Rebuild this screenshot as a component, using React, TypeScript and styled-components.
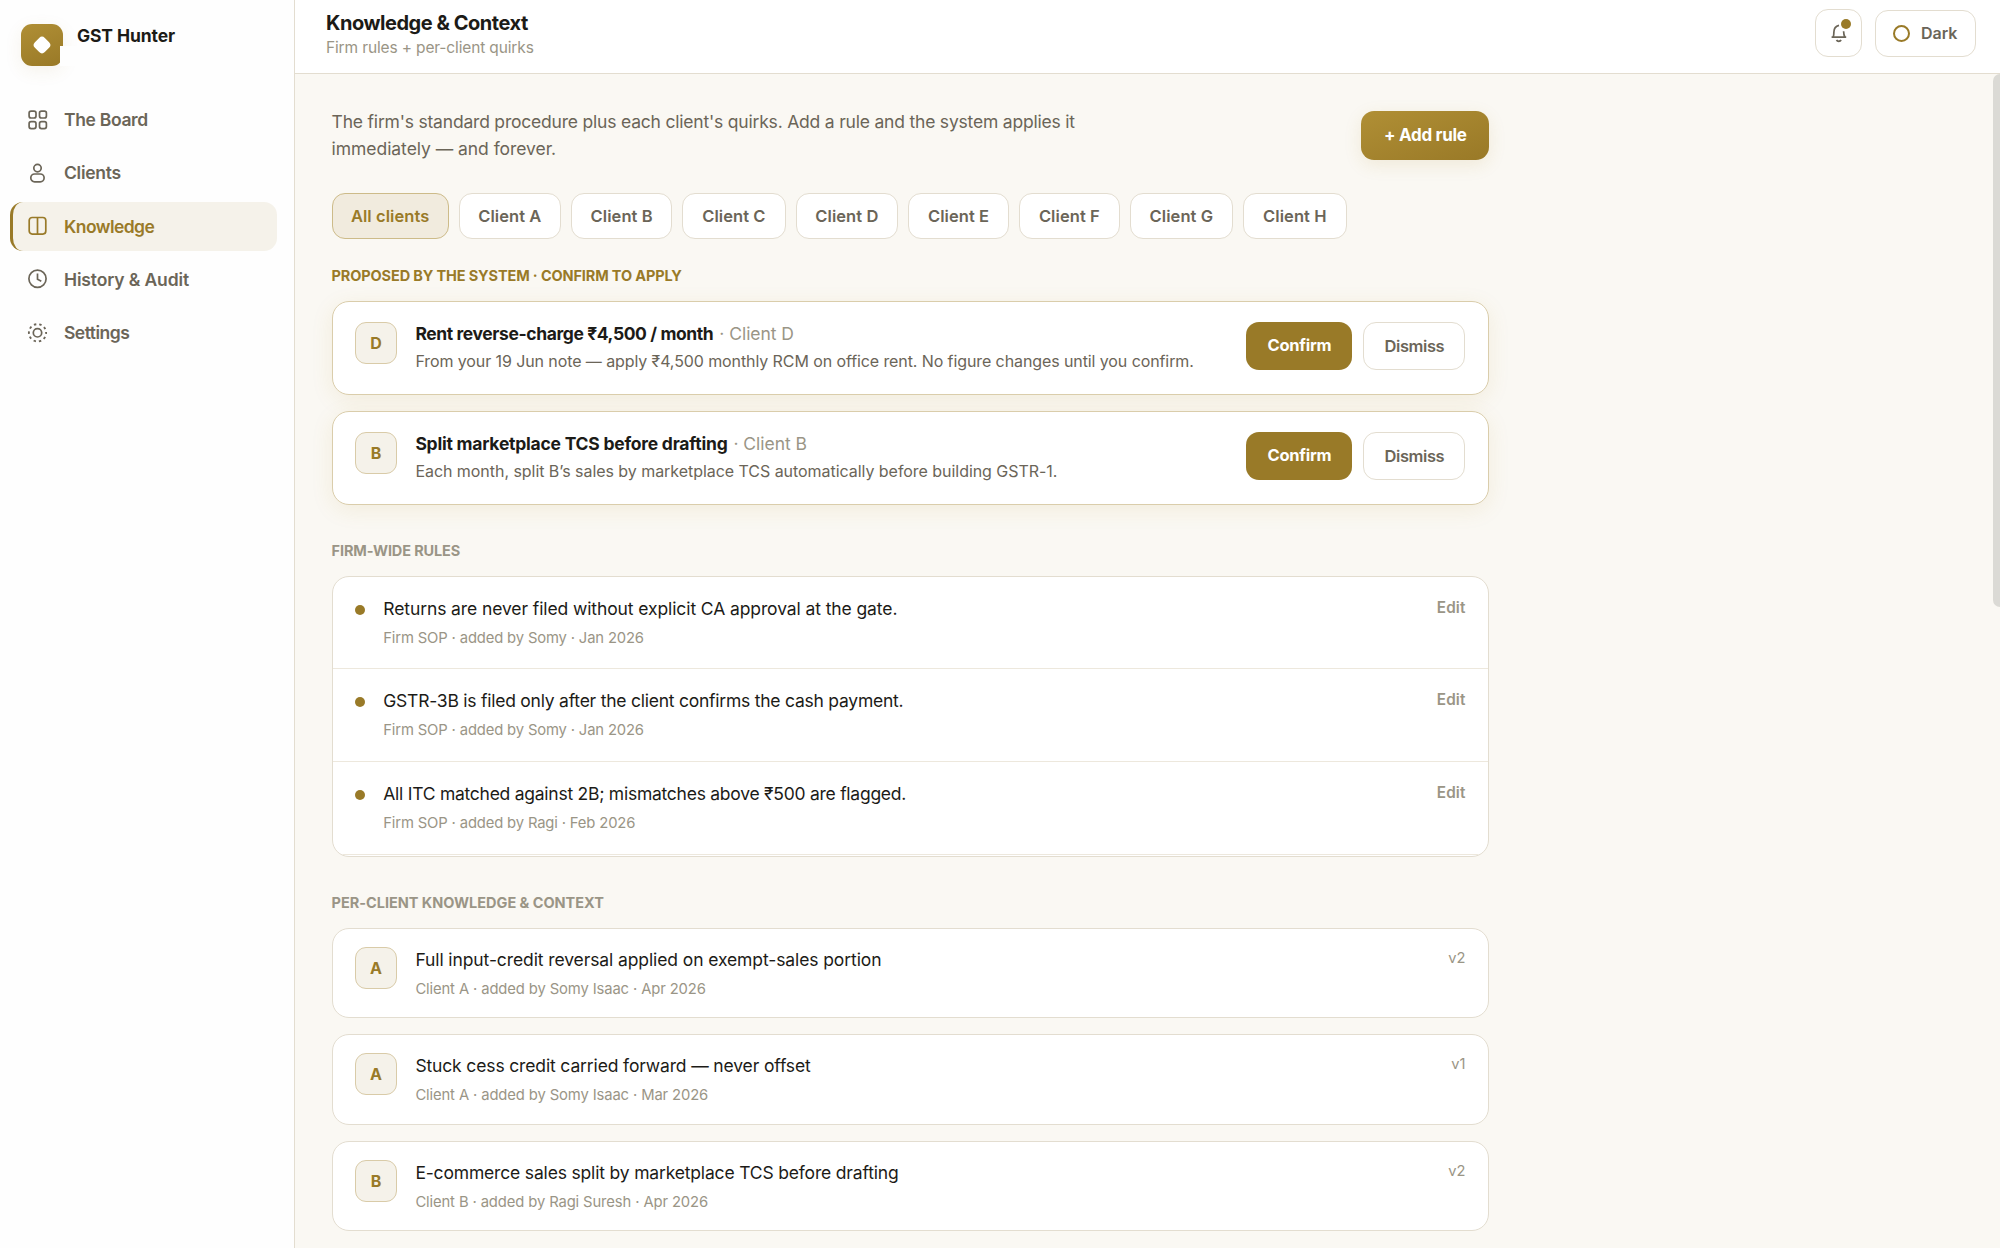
import React from "react";
import styled, { createGlobalStyle, css } from "styled-components";

const color = {
  ink: "#1c1b17",
  muted: "#6b6558",
  faint: "#9a9586",
  gold: "#997a28",
  goldLine: "#dacdab",
  line: "#e3ddd0",
  lineSoft: "#ede8dd",
  page: "#faf8f3",
  tint: "#f5f2ea",
};

const GlobalStyle = createGlobalStyle`
  *, *::before, *::after { box-sizing: border-box; }
  body {
    margin: 0;
    background: ${color.page};
    color: ${color.ink};
    font-family: Inter, "Liberation Sans", sans-serif;
    -webkit-font-smoothing: antialiased;
  }
  button { font: inherit; cursor: pointer; }
`;

type Tracked = { $ls?: number };
const tracking = css<Tracked>`
  letter-spacing: ${({ $ls = 0 }) => $ls}px;
  white-space: nowrap;
`;

const Shell = styled.div`
  display: grid;
  grid-template-columns: 295px minmax(0, 1fr);
  height: 1248px;
  overflow: hidden;
`;

/* ---------- Sidebar ---------- */

const Sidebar = styled.aside`
  background: #fefefe;
  border-right: 1px solid ${color.line};
  padding: 24px 17px 0 10px;
`;

const Brand = styled.div`
  display: flex;
  gap: 14px;
  height: 42px;
  padding-left: 11px;
`;

const BrandMark = styled.div`
  position: relative;
  display: grid;
  place-items: center;
  width: 42px;
  height: 42px;
  border-radius: 11px;
  background: linear-gradient(160deg, #b08f35, #997927);
  box-shadow: 0 5px 18px rgba(153, 122, 40, 0.09);

  &::after {
    content: "";
    position: absolute;
    left: 39px;
    top: 22px;
    width: 20px;
    height: 20px;
    background: #fefefe;
  }
`;

const Diamond = styled.span`
  width: 14px;
  height: 14px;
  border-radius: 4px;
  background: #fff;
  transform: rotate(45deg);
`;

const BrandName = styled.div<Tracked>`
  margin-top: 1px;
  font-size: 17.5px;
  font-weight: 700;
  line-height: 22px;
  ${tracking}
`;

const Nav = styled.nav`
  display: flex;
  flex-direction: column;
  gap: 4.2px;
  margin-top: 29.3px;
`;

const NavItem = styled.a<Tracked & { $active?: boolean }>`
  display: flex;
  align-items: center;
  gap: 16.4px;
  height: 49px;
  padding-left: 14.6px;
  border-left: 3px solid ${({ $active }) => ($active ? color.gold : "transparent")};
  border-radius: 13px;
  background: ${({ $active }) => ($active ? color.tint : "transparent")};
  color: ${({ $active }) => ($active ? color.gold : color.muted)};
  font-size: 17.5px;
  font-weight: 600;
  ${tracking}

  svg {
    flex: none;
    width: 20px;
    height: 20px;
    overflow: visible;
  }
`;

/* ---------- Top bar ---------- */

const Workspace = styled.div`
  display: flex;
  flex-direction: column;
  min-width: 0;
`;

const TopBar = styled.header`
  display: flex;
  justify-content: space-between;
  align-items: flex-start;
  height: 74px;
  flex: none;
  padding: 9px 24px 0 31px;
  background: #fff;
  border-bottom: 1px solid ${color.line};
`;

const PageTitle = styled.h1<Tracked>`
  margin: 2px 0 0;
  font-size: 20px;
  font-weight: 700;
  line-height: 24px;
  ${tracking}
`;

const PageSubtitle = styled.div<Tracked>`
  margin-top: 3px;
  color: ${color.faint};
  font-size: 15.5px;
  line-height: 20px;
  ${tracking}
`;

const TopActions = styled.div`
  display: flex;
  align-items: flex-end;
  gap: 13px;
`;

const IconButton = styled.button`
  position: relative;
  display: grid;
  place-items: center;
  width: 47px;
  height: 48px;
  padding: 0 0 1px;
  border: 1px solid ${color.line};
  border-radius: 13px;
  background: #fff;
  color: ${color.muted};
`;

const Unread = styled.span`
  position: absolute;
  top: 9px;
  right: 10px;
  width: 10px;
  height: 10px;
  border-radius: 50%;
  background: ${color.gold};
`;

const ThemeButton = styled.button<Tracked>`
  display: flex;
  align-items: center;
  gap: 11px;
  width: 101px;
  height: 47px;
  padding: 0 0 1px 17px;
  border: 1px solid ${color.line};
  border-radius: 13px;
  background: #fff;
  color: ${color.muted};
  font-size: 16px;
  font-weight: 600;
  ${tracking}
`;

const Ring = styled.span`
  width: 17px;
  height: 17px;
  border: 2px solid ${color.gold};
  border-radius: 50%;
`;

/* ---------- Content ---------- */

const Main = styled.main`
  position: relative;
  flex: 1;
  min-height: 0;
  overflow: hidden;
  padding: 33px 36.6px 0;
  background: ${color.page};
`;

const ScrollThumb = styled.div`
  position: absolute;
  top: 0;
  right: 0;
  width: 7px;
  height: 533px;
  border-radius: 7px 0 0 7px;
  background: #dbdad5;
`;

const Column = styled.div`
  width: 1157.8px;
`;

const IntroRow = styled.div`
  display: flex;
  justify-content: space-between;
  align-items: center;
  height: 56px;
`;

const IntroText = styled.p`
  margin: 0;
  color: ${color.muted};
  font-size: 17.5px;
  line-height: 27px;
`;

const IntroLine = styled.span<Tracked>`
  display: block;
  ${tracking}
`;

const PrimaryButton = styled.button<Tracked>`
  width: 128px;
  height: 49px;
  padding: 0;
  border: 0;
  border-radius: 13px;
  background: linear-gradient(160deg, #b08f35, #997927);
  box-shadow: 0 5px 18px rgba(170, 130, 30, 0.12);
  color: #fff;
  font-size: 17px;
  font-weight: 700;
  ${tracking}
`;

const Chips = styled.div`
  display: flex;
  gap: 10px;
  margin-top: 30px;
`;

const Chip = styled.button<Tracked & { $active?: boolean; $width: number }>`
  width: ${({ $width }) => $width}px;
  height: 46px;
  padding: 0;
  border: 1px solid ${({ $active }) => ($active ? "#cdbb89" : color.line)};
  border-radius: 13px;
  background: ${({ $active }) => ($active ? "#f1ebde" : "#fff")};
  color: ${({ $active }) => ($active ? color.gold : color.muted)};
  font-size: 16.5px;
  font-weight: 600;
  ${tracking}
`;

const SectionLabel = styled.h2<Tracked & { $accent?: boolean }>`
  margin: ${({ $accent }) => ($accent ? "27px" : "36px")} 0 15px;
  color: ${({ $accent }) => ($accent ? color.gold : color.faint)};
  font-size: 14.5px;
  font-weight: 650;
  line-height: 20px;
  text-transform: uppercase;
  ${tracking}
`;

const CardStack = styled.div`
  display: flex;
  flex-direction: column;
  gap: 16px;
`;

const card = css`
  border: 1px solid ${color.line};
  border-radius: 17px;
  background: #fff;
`;

const ProposalCard = styled.article`
  ${card}
  display: flex;
  gap: 18.4px;
  height: 94px;
  padding: 20px 23px 0 22.4px;
  border-color: ${color.goldLine};
  box-shadow: 0 5px 22px rgba(180, 140, 30, 0.1);
`;

const KnowledgeCard = styled.article`
  ${card}
  display: flex;
  gap: 18.4px;
  height: 90.4px;
  padding: 18px 23px 0 22.4px;
`;

const Avatar = styled.div`
  display: grid;
  place-items: center;
  flex: none;
  width: 42px;
  height: 42px;
  border: 1px solid #d9cba8;
  border-radius: 11px;
  background: ${color.tint};
  color: ${color.gold};
  font-size: 16px;
  font-weight: 700;
`;

const CardBody = styled.div`
  flex: 1;
  min-width: 0;
`;

const ProposalTitle = styled.div<Tracked>`
  font-size: 17.5px;
  font-weight: 700;
  line-height: 24px;
  ${tracking}
`;

const ProposalClient = styled.span<Tracked>`
  margin-left: 6px;
  color: ${color.faint};
  font-weight: 400;
  ${tracking}
`;

const ProposalNote = styled.div<Tracked>`
  margin-top: 2.8px;
  color: ${color.muted};
  font-size: 16px;
  line-height: 24px;
  ${tracking}
`;

const ProposalActions = styled.div`
  display: flex;
  gap: 11px;
`;

const ConfirmButton = styled.button<Tracked>`
  width: 106px;
  height: 48px;
  padding: 0 0 3px;
  border: 0;
  border-radius: 13px;
  background: ${color.gold};
  color: #fff;
  font-size: 16.5px;
  font-weight: 700;
  ${tracking}
`;

const DismissButton = styled.button<Tracked>`
  width: 102px;
  height: 48px;
  padding: 0;
  border: 1px solid ${color.line};
  border-radius: 13px;
  background: #fff;
  color: ${color.muted};
  font-size: 16.5px;
  font-weight: 600;
  ${tracking}
`;

const RuleList = styled.div`
  ${card}
  height: 281px;
  overflow: hidden;
`;

const RuleRow = styled.div`
  display: flex;
  height: 93px;
  padding: 19px 23px 0 22.4px;
  border-bottom: 1px solid ${color.lineSoft};

  &:first-child {
    height: 92px;
  }
`;

const Bullet = styled.span`
  flex: none;
  width: 10px;
  height: 10px;
  margin: 9px 18.3px 0 0;
  border-radius: 50%;
  background: ${color.gold};
`;

const EntryTitle = styled.div<Tracked>`
  font-size: 17.5px;
  line-height: 26px;
  ${tracking}
`;

const EntryMeta = styled.div<Tracked>`
  margin-top: 5px;
  color: ${color.faint};
  font-size: 14.8px;
  line-height: 23px;
  ${tracking}
`;

const EditLink = styled.a<Tracked>`
  margin-top: 2px;
  color: ${color.faint};
  font-size: 15.3px;
  font-weight: 600;
  line-height: 20px;
  ${tracking}
`;

const Version = styled.span`
  margin-top: 1px;
  color: ${color.faint};
  font-size: 14.7px;
  line-height: 20px;
`;

/* ---------- Icons ---------- */

const stroke = { fill: "none", stroke: "currentColor", strokeWidth: 1.7 } as const;

const BoardIcon = () => (
  <svg viewBox="0 0 20 20" {...stroke}>
    <rect x="1.1" y="1.1" width="6.9" height="6.9" rx="2" />
    <rect x="11.5" y="1.1" width="6.9" height="6.9" rx="2" />
    <rect x="1.1" y="11.7" width="6.9" height="6.9" rx="2" />
    <rect x="11.5" y="11.7" width="6.9" height="6.9" rx="2" />
  </svg>
);

const ClientsIcon = () => (
  <svg viewBox="0 0 20 20" {...stroke}>
    <circle cx="9.5" cy="5.1" r="3.7" />
    <rect x="2.8" y="11" width="13.3" height="7.8" rx="3.8" />
  </svg>
);

const KnowledgeIcon = () => (
  <svg viewBox="0 0 20 20" {...stroke}>
    <rect x="1.2" y="1.5" width="16.6" height="16.6" rx="3" />
    <path d="M9.5 1.5v16.6" />
  </svg>
);

const HistoryIcon = () => (
  <svg viewBox="0 0 20 20" {...stroke}>
    <circle cx="9.5" cy="9.8" r="8.6" />
    <path d="M9.5 4.6v5.6l3.8 2" />
  </svg>
);

const SettingsIcon = () => (
  <svg viewBox="0 0 20 20" {...stroke}>
    <circle cx="9.5" cy="9.8" r="4.2" />
    <circle cx="9.5" cy="9.8" r="8.6" strokeWidth="1.9" strokeDasharray="2.4 3.004" strokeDashoffset="1.2" />
  </svg>
);

const BellIcon = () => (
  <svg width="18" height="20" viewBox="0 0 18 20" {...stroke} strokeWidth="1.7">
    <path d="M1.6 14.2H16.2M3.2 14C3.8 12.6 3.9 11.3 3.9 9.1 3.9 5.4 5.8 3 9 2.3M13.6 8.2C13.7 11.3 14 12.6 14.8 14" />
    <path d="M6.5 17c.9 1.7 3.7 1.7 4.6 0" />
  </svg>
);

/* ---------- Data ---------- */

const navItems = [
  { label: "The Board", icon: BoardIcon, ls: -0.33 },
  { label: "Clients", icon: ClientsIcon, ls: -0.26 },
  { label: "Knowledge", icon: KnowledgeIcon, ls: -0.55, active: true },
  { label: "History & Audit", icon: HistoryIcon, ls: -0.13 },
  { label: "Settings", icon: SettingsIcon, ls: -0.5 },
];

const chips = [
  { label: "All clients", width: 117, active: true },
  { label: "Client A", width: 102.5 },
  { label: "Client B", width: 101 },
  { label: "Client C", width: 103.5 },
  { label: "Client D", width: 102.5 },
  { label: "Client E", width: 101 },
  { label: "Client F", width: 100.5 },
  { label: "Client G", width: 103.5 },
  { label: "Client H", width: 103.5 },
];

const proposals = [
  {
    initial: "D",
    title: "Rent reverse-charge ₹4,500 / month",
    titleLs: -0.4,
    note: "From your 19 Jun note — apply ₹4,500 monthly RCM on office rent. No figure changes until you confirm.",
    noteLs: -0.095,
  },
  {
    initial: "B",
    title: "Split marketplace TCS before drafting",
    titleLs: -0.23,
    note: "Each month, split B’s sales by marketplace TCS automatically before building GSTR-1.",
    noteLs: -0.045,
  },
];

const rules = [
  { text: "Returns are never filed without explicit CA approval at the gate.", ls: -0.1, by: "Somy · Jan 2026" },
  { text: "GSTR-3B is filed only after the client confirms the cash payment.", ls: -0.235, by: "Somy · Jan 2026" },
  { text: "All ITC matched against 2B; mismatches above ₹500 are flagged.", ls: -0.255, by: "Ragi · Feb 2026" },
];

const entries = [
  { client: "A", text: "Full input-credit reversal applied on exempt-sales portion", ls: -0.1, by: "Somy Isaac · Apr 2026", version: "v2" },
  { client: "A", text: "Stuck cess credit carried forward — never offset", ls: -0.14, by: "Somy Isaac · Mar 2026", version: "v1" },
  { client: "B", text: "E-commerce sales split by marketplace TCS before drafting", ls: -0.17, by: "Ragi Suresh · Apr 2026", version: "v2" },
];

export default function App() {
  return (
    <>
      <GlobalStyle />
      <Shell>
        <Sidebar>
          <Brand>
            <BrandMark>
              <Diamond />
            </BrandMark>
            <BrandName $ls={-0.11}>GST Hunter</BrandName>
          </Brand>
          <Nav>
            {navItems.map(({ label, icon: Icon, ls, active }) => (
              <NavItem key={label} $active={active} $ls={ls}>
                <Icon />
                {label}
              </NavItem>
            ))}
          </Nav>
        </Sidebar>

        <Workspace>
          <TopBar>
            <div>
              <PageTitle $ls={-0.46}>Knowledge &amp; Context</PageTitle>
              <PageSubtitle $ls={-0.14}>Firm rules + per-client quirks</PageSubtitle>
            </div>
            <TopActions>
              <IconButton aria-label="Notifications">
                <BellIcon />
                <Unread />
              </IconButton>
              <ThemeButton $ls={0}>
                <Ring />
                Dark
              </ThemeButton>
            </TopActions>
          </TopBar>

          <Main>
            <Column>
              <IntroRow>
                <IntroText>
                  <IntroLine $ls={-0.2}>
                    The firm's standard procedure plus each client's quirks. Add a rule and the system applies it
                  </IntroLine>
                  <IntroLine $ls={-0.05}>immediately — and forever.</IntroLine>
                </IntroText>
                <PrimaryButton $ls={-0.3}>+ Add rule</PrimaryButton>
              </IntroRow>

              <Chips>
                {chips.map(({ label, width, active }) => (
                  <Chip key={label} $width={width} $active={active} $ls={0.07}>
                    {label}
                  </Chip>
                ))}
              </Chips>

              <SectionLabel $accent $ls={-0.13}>
                Proposed by the system · Confirm to apply
              </SectionLabel>
              <CardStack>
                {proposals.map((p) => (
                  <ProposalCard key={p.initial}>
                    <Avatar>{p.initial}</Avatar>
                    <CardBody>
                      <ProposalTitle $ls={p.titleLs}>
                        {p.title}
                        <ProposalClient $ls={-0.05}>· Client {p.initial}</ProposalClient>
                      </ProposalTitle>
                      <ProposalNote $ls={p.noteLs}>{p.note}</ProposalNote>
                    </CardBody>
                    <ProposalActions>
                      <ConfirmButton $ls={-0.26}>Confirm</ConfirmButton>
                      <DismissButton $ls={-0.4}>Dismiss</DismissButton>
                    </ProposalActions>
                  </ProposalCard>
                ))}
              </CardStack>

              <SectionLabel $ls={-0.13}>Firm-wide rules</SectionLabel>
              <RuleList>
                {rules.map((r) => (
                  <RuleRow key={r.text}>
                    <Bullet />
                    <CardBody>
                      <EntryTitle $ls={r.ls}>{r.text}</EntryTitle>
                      <EntryMeta $ls={-0.15}>Firm SOP · added by {r.by}</EntryMeta>
                    </CardBody>
                    <EditLink $ls={0.1}>Edit</EditLink>
                  </RuleRow>
                ))}
              </RuleList>

              <SectionLabel $ls={-0.02}>Per-client knowledge &amp; context</SectionLabel>
              <CardStack>
                {entries.map((e) => (
                  <KnowledgeCard key={e.text}>
                    <Avatar>{e.client}</Avatar>
                    <CardBody>
                      <EntryTitle $ls={e.ls}>{e.text}</EntryTitle>
                      <EntryMeta $ls={-0.12}>
                        Client {e.client} · added by {e.by}
                      </EntryMeta>
                    </CardBody>
                    <Version>{e.version}</Version>
                  </KnowledgeCard>
                ))}
              </CardStack>
            </Column>
            <ScrollThumb />
          </Main>
        </Workspace>
      </Shell>
    </>
  );
}
